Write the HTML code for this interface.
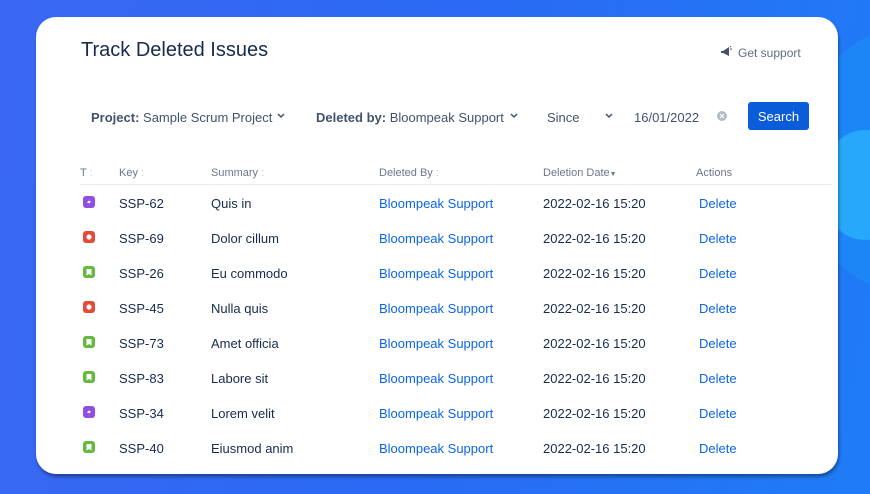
<!DOCTYPE html>
<html><head><style>
*{margin:0;padding:0;box-sizing:border-box}
body{width:870px;height:494px;overflow:hidden;font-family:"Liberation Sans",sans-serif;background:linear-gradient(100deg,#3a67f2 0%,#2a6af4 50%,#1f7cf6 100%);position:relative}
.c1{position:absolute;left:800px;top:30px;width:200px;height:260px;border-radius:50%;background:#1c86f7}
.c2{position:absolute;left:820px;top:130px;width:90px;height:110px;border-radius:50%;background:#28a8fa}
.card{position:absolute;left:36px;top:17px;width:802px;height:457px;background:#fff;border-radius:20px;box-shadow:1px 3px 3px rgba(0,0,0,.35)}
.t{position:absolute;white-space:nowrap}
.h1{left:45px;top:22px;font-size:20px;color:#172b4d}
.gs{left:683px;top:29px;font-size:12px;color:#5e6c84}
.f{top:93px;font-size:13px;color:#42526e}
.btn{position:absolute;left:712px;top:85px;width:61px;height:28px;background:#0b5cd9;border-radius:3px;color:#fff;font-size:13px;text-align:center;line-height:30px}
.hd{top:150px;font-size:11px;color:#6b778c}
.line{position:absolute;left:44px;top:167px;width:752px;height:1px;background:#ebecf0}
.r{font-size:13px;color:#172b4d}
.lk{color:#0c66e4}
.ic{position:absolute;left:47px;width:12px;height:12px}
.chev{position:absolute;top:96px}
</style></head><body>
<div class="c1"></div><div class="c2"></div>
<div class="card">
<div class="t h1">Track Deleted Issues</div>
<svg style="position:absolute;left:684px;top:29px" width="12" height="11" viewBox="0 0 12 11"><path d="M1 5h2l6-4v9L3 7H1z" fill="#42526e"/><path d="M10 1l1-1M10 3h2" stroke="#42526e"/></svg>
<div class="t gs" style="left:702px">Get support</div>
<div class="t f" style="left:55px"><b>Project:</b> Sample Scrum Project</div>
<svg class="chev" style="left:241px" width="8" height="6"><path d="M1 1l3 3 3-3" stroke="#42526e" stroke-width="1.5" fill="none"/></svg>
<div class="t f" style="left:280px"><b>Deleted by:</b> Bloompeak Support</div>
<svg class="chev" style="left:474px" width="8" height="6"><path d="M1 1l3 3 3-3" stroke="#42526e" stroke-width="1.5" fill="none"/></svg>
<div class="t f" style="left:511px">Since</div>
<svg class="chev" style="left:569px" width="8" height="6"><path d="M1 1l3 3 3-3" stroke="#42526e" stroke-width="1.5" fill="none"/></svg>
<div class="t f" style="left:598px">16/01/2022</div>
<svg style="position:absolute;left:681px;top:94px" width="10" height="10"><circle cx="5" cy="5" r="5" fill="#b3bac5"/><path d="M3 3l4 4M7 3l-4 4" stroke="#fff" stroke-width="1.2"/></svg>
<div class="btn">Search</div>
<div class="t hd" style="left:44px">T <span style="color:#ccc">:</span></div>
<div class="t hd" style="left:83px">Key <span style="color:#ccc">:</span></div>
<div class="t hd" style="left:175px">Summary <span style="color:#ccc">:</span></div>
<div class="t hd" style="left:343px">Deleted By <span style="color:#ccc">:</span></div>
<div class="t hd" style="left:507px">Deletion Date<span style="font-size:7px">&#9660;</span></div>
<div class="t hd" style="left:660px">Actions</div>
<div class="line"></div>
</div>
<svg width="0" height="0" style="position:absolute"><defs>
<symbol id="p" viewBox="0 0 12 12"><rect width="12" height="12" rx="3" fill="#904ee2"/><path d="M7 2L4 7h2.5L5 10l3-5H5.5z" fill="#fff"/></symbol>
<symbol id="b" viewBox="0 0 12 12"><rect width="12" height="12" rx="3" fill="#e5493a"/><circle cx="6" cy="6" r="2.6" fill="#fff"/></symbol>
<symbol id="g" viewBox="0 0 12 12"><rect width="12" height="12" rx="3" fill="#63ba3c"/><path d="M3.5 3h5v6.5L6 8 3.5 9.5z" fill="#fff"/></symbol>
</defs></svg>
<div class="card" style="background:transparent;box-shadow:none">
<svg class="ic" style="top:179px"><use href="#p"/></svg>
<div class="t r" style="left:83px;top:179px">SSP-62</div><div class="t r" style="left:175px;top:179px">Quis in</div><div class="t r lk" style="left:343px;top:179px">Bloompeak Support</div><div class="t r" style="left:507px;top:179px">2022-02-16 15:20</div><div class="t r lk" style="left:663px;top:179px">Delete</div>
<svg class="ic" style="top:214px"><use href="#b"/></svg>
<div class="t r" style="left:83px;top:214px">SSP-69</div><div class="t r" style="left:175px;top:214px">Dolor cillum</div><div class="t r lk" style="left:343px;top:214px">Bloompeak Support</div><div class="t r" style="left:507px;top:214px">2022-02-16 15:20</div><div class="t r lk" style="left:663px;top:214px">Delete</div>
<svg class="ic" style="top:249px"><use href="#g"/></svg>
<div class="t r" style="left:83px;top:249px">SSP-26</div><div class="t r" style="left:175px;top:249px">Eu commodo</div><div class="t r lk" style="left:343px;top:249px">Bloompeak Support</div><div class="t r" style="left:507px;top:249px">2022-02-16 15:20</div><div class="t r lk" style="left:663px;top:249px">Delete</div>
<svg class="ic" style="top:284px"><use href="#b"/></svg>
<div class="t r" style="left:83px;top:284px">SSP-45</div><div class="t r" style="left:175px;top:284px">Nulla quis</div><div class="t r lk" style="left:343px;top:284px">Bloompeak Support</div><div class="t r" style="left:507px;top:284px">2022-02-16 15:20</div><div class="t r lk" style="left:663px;top:284px">Delete</div>
<svg class="ic" style="top:319px"><use href="#g"/></svg>
<div class="t r" style="left:83px;top:319px">SSP-73</div><div class="t r" style="left:175px;top:319px">Amet officia</div><div class="t r lk" style="left:343px;top:319px">Bloompeak Support</div><div class="t r" style="left:507px;top:319px">2022-02-16 15:20</div><div class="t r lk" style="left:663px;top:319px">Delete</div>
<svg class="ic" style="top:354px"><use href="#g"/></svg>
<div class="t r" style="left:83px;top:354px">SSP-83</div><div class="t r" style="left:175px;top:354px">Labore sit</div><div class="t r lk" style="left:343px;top:354px">Bloompeak Support</div><div class="t r" style="left:507px;top:354px">2022-02-16 15:20</div><div class="t r lk" style="left:663px;top:354px">Delete</div>
<svg class="ic" style="top:389px"><use href="#p"/></svg>
<div class="t r" style="left:83px;top:389px">SSP-34</div><div class="t r" style="left:175px;top:389px">Lorem velit</div><div class="t r lk" style="left:343px;top:389px">Bloompeak Support</div><div class="t r" style="left:507px;top:389px">2022-02-16 15:20</div><div class="t r lk" style="left:663px;top:389px">Delete</div>
<svg class="ic" style="top:424px"><use href="#g"/></svg>
<div class="t r" style="left:83px;top:424px">SSP-40</div><div class="t r" style="left:175px;top:424px">Eiusmod anim</div><div class="t r lk" style="left:343px;top:424px">Bloompeak Support</div><div class="t r" style="left:507px;top:424px">2022-02-16 15:20</div><div class="t r lk" style="left:663px;top:424px">Delete</div>
</div>
</body></html>
